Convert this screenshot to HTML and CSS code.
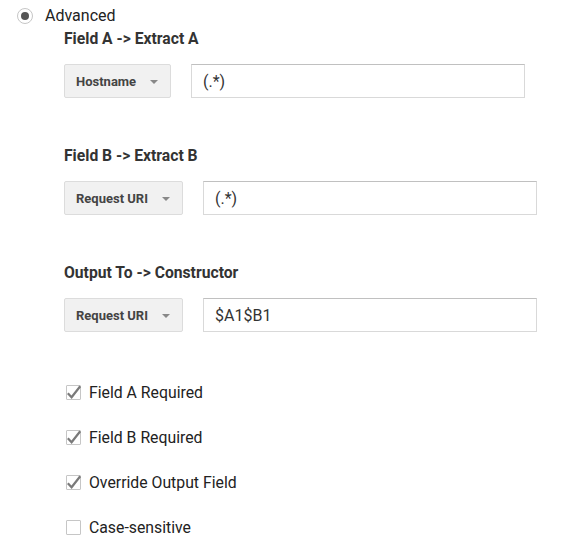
FILE: index.html
```html
<!DOCTYPE html>
<html>
<head>
<meta charset="utf-8">
<link rel="stylesheet" href="styles.css">
</head>
<body>
<div class="page">
  <label class="radio-row">
    <span class="radio"><span class="radio-dot"></span></span>
    <span class="radio-label">Advanced</span>
  </label>
  <div class="content">
    <div class="section">
      <div class="heading">Field A -&gt; Extract A</div>
      <div class="field-row">
        <div class="dropdown dd-short"><span class="dd-text">Hostname</span><span class="dd-arrow"></span></div>
        <div class="text-input">(.*)</div>
      </div>
    </div>
    <div class="section">
      <div class="heading">Field B -&gt; Extract B</div>
      <div class="field-row">
        <div class="dropdown dd-long"><span class="dd-text">Request URI</span><span class="dd-arrow"></span></div>
        <div class="text-input">(.*)</div>
      </div>
    </div>
    <div class="section">
      <div class="heading">Output To -&gt; Constructor</div>
      <div class="field-row">
        <div class="dropdown dd-long"><span class="dd-text">Request URI</span><span class="dd-arrow"></span></div>
        <div class="text-input">$A1$B1</div>
      </div>
    </div>
    <div class="checks">
      <div class="check-row">
        <span class="checkbox"><svg viewBox="0 0 15 15" width="15" height="15"><path d="M1.8 8.2 L5.6 12.2 L14.2 1.2" fill="none" stroke="#7a7a7a" stroke-width="2.2"/></svg></span>
        <span class="check-label">Field A Required</span>
      </div>
      <div class="check-row">
        <span class="checkbox"><svg viewBox="0 0 15 15" width="15" height="15"><path d="M1.8 8.2 L5.6 12.2 L14.2 1.2" fill="none" stroke="#7a7a7a" stroke-width="2.2"/></svg></span>
        <span class="check-label">Field B Required</span>
      </div>
      <div class="check-row">
        <span class="checkbox"><svg viewBox="0 0 15 15" width="15" height="15"><path d="M1.8 8.2 L5.6 12.2 L14.2 1.2" fill="none" stroke="#7a7a7a" stroke-width="2.2"/></svg></span>
        <span class="check-label">Override Output Field</span>
      </div>
      <div class="check-row">
        <span class="checkbox"></span>
        <span class="check-label">Case-sensitive</span>
      </div>
    </div>
  </div>
</div>
</body>
</html>
```

FILE: styles.css
```css
html, body {
  margin: 0;
  padding: 0;
  background: #ffffff;
}
body {
  font-family: Roboto, "Liberation Sans", Arial, sans-serif;
  color: #222;
}
.page {
  padding-top: 1px;
}
.radio-row {
  display: flex;
  align-items: center;
  height: 28px;
  padding-left: 17px;
}
.radio {
  width: 16px;
  height: 16px;
  box-sizing: border-box;
  border: 1px solid #c6c6c6;
  border-radius: 50%;
  background: #fff;
  display: flex;
  align-items: center;
  justify-content: center;
  margin-top: 2px;
}
.radio-dot {
  width: 8px;
  height: 8px;
  border-radius: 50%;
  background: #555;
}
.radio-label {
  margin-left: 12px;
  font-size: 16px;
  color: #222;
}
.content {
  padding-left: 64px;
}
.section {
  margin-bottom: 48px;
}
.heading {
  font-size: 15.7px;
  font-weight: 700;
  line-height: 20px;
  color: #333;
  margin-bottom: 15px;
}
.field-row {
  display: flex;
  align-items: stretch;
  height: 34px;
}
.dropdown {
  box-sizing: border-box;
  display: flex;
  align-items: center;
  justify-content: space-between;
  padding: 0 12px 0 11px;
  background: #f1f1f1;
  border: 1px solid #dcdcdc;
  border-radius: 2px;
  font-size: 13px;
  font-weight: 700;
  color: #444;
}
.dd-short {
  width: 107px;
}
.dd-long {
  width: 119px;
}
.dd-arrow {
  width: 0;
  height: 0;
  border-left: 4px solid transparent;
  border-right: 4px solid transparent;
  border-top: 4px solid #888;
  margin-top: 1px;
}
.text-input {
  box-sizing: border-box;
  width: 334px;
  margin-left: 20px;
  display: flex;
  align-items: center;
  padding-left: 11px;
  border: 1px solid #d9d9d9;
  border-top-color: #c0c0c0;
  font-size: 16px;
  color: #333;
}
.checks {
  display: flex;
  flex-direction: column;
  gap: 30px;
  padding-top: 5px;
  padding-left: 2px;
}
.check-row {
  display: flex;
  align-items: center;
  height: 15px;
}
.checkbox {
  box-sizing: border-box;
  width: 15px;
  height: 15px;
  border: 1px solid #c6c6c6;
  border-radius: 1px;
  background: #fff;
  display: flex;
  align-items: center;
  justify-content: center;
  overflow: visible;
}
.checkbox svg {
  display: block;
  flex: none;
  overflow: visible;
}
.check-label {
  margin-left: 8px;
  font-size: 15.8px;
  color: #222;
}
```
